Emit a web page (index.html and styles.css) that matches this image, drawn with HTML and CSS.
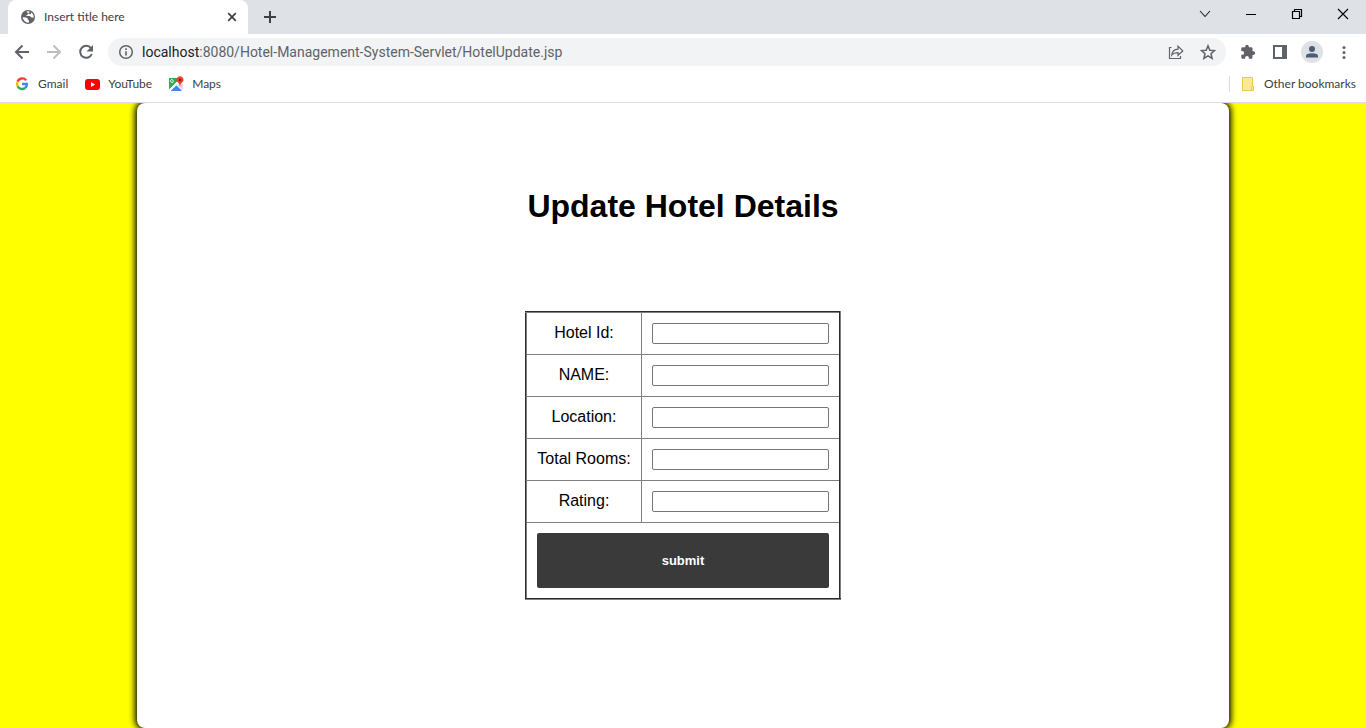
FILE: index.html
```html
<!DOCTYPE html>
<html lang="en">
<head>
  <meta charset="UTF-8" />
  <meta name="viewport" content="width=device-width,initial-scale=1" />
  <title>Insert title here</title>
  <link rel="stylesheet" href="styles.css">
</head>
<body>
  <header class="browser">
    <div class="tab-strip">
      <div class="tab">
        <svg width="16" height="16" viewBox="0 0 16 16"><circle cx="8" cy="8" r="7" fill="#5f6368"/><path d="M2.6 8.3 6 8.6q1.8.2 1.8 1.7v.5q1.1 0 1.1 1v1.8A5.7 5.7 0 0 1 2.6 8.3ZM6.4 2.6q2-.5 3.3.1-.2 1.4-1.7 1.5L7.9 5.5 6.500 6v1h3.2q.9.1 1 1.3l2.9.5a5.8 5.8 0 0 0-2.4-5.4L10.8 5 9 5.3z" fill="#fff"/></svg>
        <span class="tab-title">Insert title here</span>
        <button class="icon-btn" aria-label="Close tab">
          <svg width="16" height="16" viewBox="0 0 16 16"><path d="m4.200 4.200 7.600 7.600m0-7.600-7.600 7.600" stroke="#3c4043" stroke-width="1.700"/></svg>
        </button>
      </div>
      <button class="icon-btn new-tab" aria-label="New tab">
        <svg width="16" height="16" viewBox="0 0 16 16"><path d="M8 2v12M2 8h12" stroke="#3c4043" stroke-width="2"/></svg>
      </button>
      <div class="window-controls">
        <button class="icon-btn" aria-label="Search tabs">
          <svg width="16" height="16" viewBox="0 0 16 16"><path d="m3 5 5 5.500L13 5" fill="none" stroke="#202124" stroke-width="1.100"/></svg>
        </button>
        <button class="icon-btn" aria-label="Minimize">
          <svg width="16" height="16" viewBox="0 0 16 16"><path d="M3 8.500h10" stroke="#000"/></svg>
        </button>
        <button class="icon-btn" aria-label="Restore">
          <svg width="16" height="16" viewBox="0 0 16 16"><path d="M3.500 5.500h7v7h-7zM5.500 5.500v-2h7v7h-2" fill="none" stroke="#000" stroke-width="1.200"/></svg>
        </button>
        <button class="icon-btn" aria-label="Close">
          <svg width="16" height="16" viewBox="0 0 16 16"><path d="m3 3 10 10m0-10L3 13" stroke="#000" stroke-width="1.100"/></svg>
        </button>
      </div>
    </div>

    <div class="toolbar">
      <button class="icon-btn" aria-label="Back">
        <svg width="16" height="16" viewBox="0 0 16 16"><path d="M15 8H2.500M8.500 1.500 2 8l6.500 6.500" fill="none" stroke="#5f6368" stroke-width="2"/></svg>
      </button>
      <button class="icon-btn" aria-label="Forward">
        <svg width="16" height="16" viewBox="0 0 16 16"><path d="M1 8h12.500M7.500 1.500 14 8l-6.500 6.500" fill="none" stroke="#bcbec1" stroke-width="2"/></svg>
      </button>
      <button class="icon-btn" aria-label="Reload">
        <svg width="16" height="16" viewBox="0 0 16 16"><path d="M13 4.200A6 6 0 1 0 13.800 10" fill="none" stroke="#5f6368" stroke-width="2"/><path d="M15 1v6.500H8.500z" fill="#5f6368"/></svg>
      </button>
      <div class="address-bar">
        <svg width="16" height="16" viewBox="0 0 16 16"><circle cx="8" cy="8" r="6.300" fill="none" stroke="#5f6368" stroke-width="1.500"/><path d="M8 7.200v4.300M8 4.300v1.600" stroke="#5f6368" stroke-width="1.600"/></svg>
        <div class="url" role="textbox" aria-label="Address" contenteditable="true" spellcheck="false"><span class="host">localhost</span>:8080/Hotel-Management-System-Servlet/HotelUpdate.jsp</div>
        <button class="icon-btn" aria-label="Share">
          <svg width="16" height="16" viewBox="0 0 16 16"><path d="M3.500 3.500h-2v11h11V12M3.800 11q.5-5.500 6.200-5.900V2.200L14.800 7 10 11.300V8.600Q5.800 8.500 3.800 11z" fill="none" stroke="#5f6368" stroke-width="1.200"/></svg>
        </button>
        <button class="icon-btn" aria-label="Bookmark this page">
          <svg width="16" height="16" viewBox="0 0 16 16"><path d="m8 1.800 1.800 4.400 4.700.4L11 9.700l1.100 4.600L8 11.800l-4.100 2.500L5 9.700 1.500 6.600l4.700-.4z" fill="none" stroke="#5f6368" stroke-width="1.500"/></svg>
        </button>
      </div>
      <div class="toolbar-right">
        <button class="icon-btn" aria-label="Extensions">
          <svg width="16" height="16" viewBox="0 0 16 16"><path d="M13.400 7.300h-.9V4.600q0-1.300-1.300-1.300H8.800v-.8a1.800 1.800 0 0 0-3.600 0v.8H2.600q-1.300 0-1.300 1.300V7h.9a1.900 1.900 0 0 1 0 3.800h-.9v2.600q0 1.300 1.300 1.300h2.500v-.9a1.900 1.900 0 0 1 3.800 0v.9h2.300q1.300 0 1.300-1.300v-2.500h.9a1.800 1.800 0 0 0 0-3.600z" fill="#5f6368"/></svg>
        </button>
        <button class="icon-btn" aria-label="Side panel">
          <svg width="16" height="16" viewBox="0 0 16 16"><path d="M1 1h14v14H1zM3 3v10h7V3z" fill="#5f6368" fill-rule="evenodd"/></svg>
        </button>
        <button class="icon-btn profile" aria-label="Profile">
          <svg width="16" height="16" viewBox="0 0 16 16"><circle cx="8" cy="5" r="3" fill="#4d5b73"/><path d="M2 13.500V12q0-2.800 6-2.800t6 2.800v1.500z" fill="#4d5b73"/></svg>
        </button>
        <button class="icon-btn" aria-label="Menu">
          <svg width="16" height="16" viewBox="0 0 16 16"><g fill="#5f6368"><circle cx="8" cy="3.500" r="1.500"/><circle cx="8" cy="8.500" r="1.500"/><circle cx="8" cy="13.500" r="1.500"/></g></svg>
        </button>
      </div>
    </div>

    <nav class="bookmarks">
      <a href="#">
        <svg width="16" height="16" viewBox="0 0 16 16"><g fill="none" stroke-width="2.400"><path d="M12.100 4.200A5 5 0 0 0 3.600 5.700" stroke="#ea4335"/><path d="M3.600 5.700a5 5 0 0 0 0 4.600" stroke="#fbbc04"/><path d="M3.600 10.300a5 5 0 0 0 7.500 1.700" stroke="#34a853"/><path d="M11.100 12A5 5 0 0 0 12.900 8H8" stroke="#4285f4"/></g></svg>
        Gmail
      </a>
      <a href="#">
        <svg width="16" height="16" viewBox="0 0 16 16"><rect x="1" y="3" width="15" height="11" rx="3" fill="#f00"/><path d="m7 6 4 2.500L7 11z" fill="#fff"/></svg>
        YouTube
      </a>
      <a href="#">
        <svg width="16" height="16" viewBox="0 0 16 16"><path d="M1 2h13v13H1z" fill="#e8eaed"/><path d="M1 2h9v3L1 14z" fill="#34a853"/><path d="m2 15 6-6 6 6z" fill="#4285f4"/><path d="m1 13.500 9-9L12 6l-9.500 9H1z" fill="#fff"/><path d="m9 8.500 6 5V8z" fill="#dadce0"/><path d="M5.500 4.800H4.300M4.500 3.500a1.500 1.500 0 1 0 1 2" stroke="#fff" fill="none"/><path d="M12 11q-.2-3-2-4.400A3.500 3.500 0 1 1 14 6.600Q12.200 8 12 11z" fill="#ea4335"/><circle cx="12" cy="4" r="1.300" fill="#85201a"/></svg>
        Maps
      </a>
      <a href="#" class="other">
        <svg width="16" height="16" viewBox="0 0 16 16"><path d="M2.500 1.500h10v9h1v4h-11z" fill="#ffe793" stroke="#edc949"/><path d="M11.500 14v-3.500h2" fill="none" stroke="#edc949"/></svg>
        Other bookmarks
      </a>
    </nav>
  </header>

  <main>
    <div class="card">
      <h1>Update Hotel Details</h1>
      <form>
        <table>
          <tr>
            <td><label for="id">Hotel Id:</label></td>
            <td><input type="text" id="id" name="id"></td>
          </tr>
          <tr>
            <td><label for="name">NAME:</label></td>
            <td><input type="text" id="name" name="name"></td>
          </tr>
          <tr>
            <td><label for="location">Location:</label></td>
            <td><input type="text" id="location" name="location"></td>
          </tr>
          <tr>
            <td><label for="rooms">Total Rooms:</label></td>
            <td><input type="text" id="rooms" name="rooms"></td>
          </tr>
          <tr>
            <td><label for="rating">Rating:</label></td>
            <td><input type="text" id="rating" name="rating"></td>
          </tr>
          <tr>
            <td colspan="2"><button type="submit" class="submit">submit</button></td>
          </tr>
        </table>
      </form>
    </div>
  </main>
</body>
</html>
```
FILE: styles.css
```css
* {
  box-sizing: border-box;
}
body {
  margin: 0;
  min-height: 100vh;
  display: flex;
  flex-direction: column;
  font-family: "Liberation Sans", Arial, sans-serif;
  background: yellow;
}

/* browser bar */
.browser {
  background: #fff;
  border-bottom: 1px solid #dadce0;
  font-family: Lato, "Segoe UI", sans-serif;
  font-size: 12px;
  line-height: 16px;
  color: #3c4043;
  position: relative;
  z-index: 1;
}
.browser svg {
  display: block;
  flex: none;
}
.icon-btn {
  background: none;
  border: none;
  padding: 0;
  flex: none;
}
.tab-strip {
  display: flex;
  align-items: center;
  height: 34px;
  padding-left: 8px;
  background: #dee1e6;
}
.tab {
  display: flex;
  align-items: center;
  gap: 8px;
  width: 240px;
  height: 34px;
  padding: 0 8px 0 12px;
  background: #fff;
  border-radius: 8px 8px 0 0;
}
.tab-title {
  flex: 1;
}
.new-tab {
  margin-left: 14px;
}
.window-controls {
  display: flex;
  gap: 30px;
  margin-left: auto;
  padding: 0 15px 6px 0;
}
.toolbar {
  display: flex;
  align-items: center;
  gap: 16px;
  height: 36px;
  padding: 0 14px;
}
.address-bar {
  flex: 1;
  display: flex;
  align-items: center;
  gap: 16px;
  height: 28px;
  margin: 0 -2px;
  padding: 0 10px;
  border-radius: 14px;
  background: #f1f3f4;
}
.url {
  flex: 1;
  margin-left: -8px;
  font-family: Roboto, "Segoe UI", sans-serif;
  font-size: 14px;
  line-height: 20px;
  color: #5f6368;
  white-space: nowrap;
}
.host {
  color: #202124;
}
.toolbar-right {
  display: flex;
  align-items: center;
  gap: 16px;
}
.profile {
  margin: 0 -3px;
  padding: 3px;
  border-radius: 50%;
  background: #dee1e6;
}
.bookmarks {
  display: flex;
  align-items: center;
  gap: 16px;
  height: 32px;
  padding: 0 10px 4px 14px;
}
.bookmarks a {
  display: flex;
  align-items: center;
  gap: 8px;
  color: #3c4043;
  text-decoration: none;
}
.bookmarks .other {
  margin-left: auto;
  padding-left: 10px;
  border-left: 1px solid #dadce0;
}

/* page */
main {
  flex: 1;
  display: flex;
  justify-content: center;
}
.card {
  width: 80%;
  padding: 84px 0 128px;
  background: #fff;
  border-radius: 8px;
  box-shadow: 0 0 6px 2px #000;
}
h1 {
  margin: 0 0 86px;
  font-size: 32px;
  line-height: 38px;
  text-align: center;
}
table {
  margin: 0 auto;
  border: 2px outset #808080;
  border-collapse: collapse;
  text-align: center;
}
td {
  padding: 10px;
  border: 1px solid #808080;
}
label {
  display: block;
  padding-bottom: 2px;
}
td input {
  display: block;
  width: 177px;
  height: 21px;
  border: 1px solid #767676;
  border-radius: 2px;
}
.submit {
  display: block;
  width: 100%;
  height: 55px;
  border: none;
  border-radius: 2px;
  background: #3a3a3a;
  color: #fff;
  font-family: inherit;
  font-size: 13px;
  font-weight: bold;
}
```
